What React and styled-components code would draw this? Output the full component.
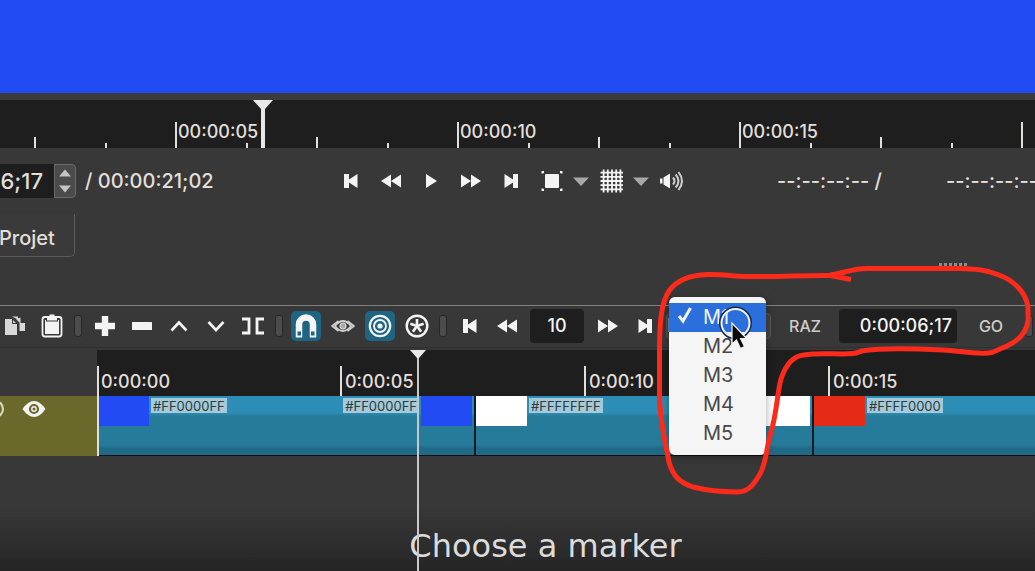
import React from 'react';
import styled, { createGlobalStyle } from 'styled-components';

const Colors = {
  panel: '#383838',
  dark: '#1e1e1e',
  text: '#e2dfda',
  white: '#f4f4f4',
  muted: '#a8a8a8',
  blue: '#234bf4',
  red: '#e52a18',
  teal: '#267b9a',
  tealLight: '#2c8eb6',
  tealDark: '#206a87',
  active: '#1d6582',
  olive: '#6b682b',
  select: '#2a6fdb',
  pen: '#fb2a1b',
};

const GlobalStyle = createGlobalStyle`
  * { box-sizing: border-box; }

  body {
    margin: 0;
    background: ${Colors.panel};
    color: ${Colors.text};
    font-family: Inter, "Liberation Sans", sans-serif;
    font-size: 18px;
  }

  button, input, select { font: inherit; color: inherit; }
`

const Page = styled.div`
  position: relative;
  display: flex;
  flex-direction: column;
  min-height: 100vh;
  overflow: hidden;
`

const Preview = styled.div`
  height: 93px;
  background: ${Colors.blue};
`

const Player = styled.section`
  border-top: 7px solid #3c3c3c;
`

/* rulers */

const Ruler = styled.div`
  position: relative;
  display: flex;
  height: ${(props) => props.$height}px;
  background: ${Colors.dark};
  overflow: hidden;
`

const RulerTrack = styled.div`
  display: flex;
  flex: none;
  margin-left: ${(props) => props.$offset}px;
`

const Segment = styled.div`
  display: flex;
  flex: none;
  width: ${(props) => props.$width}px;
`

const Tick = styled.div`
  display: flex;
  flex: 1;
  align-items: flex-end;

  &::before {
    content: '';
    flex: none;
    width: 2px;
    height: ${(props) => props.$height}px;
    background: ${Colors.text};
  }
`

const TickLabel = styled.span`
  flex: none;
  width: 0;
  padding-left: ${(props) => props.$gap}px;
  padding-bottom: ${(props) => props.$bottom}px;
  line-height: 24px;
  font-weight: 500;
  white-space: nowrap;
`

const PlayerHead = styled.svg`
  position: absolute;
  top: 0;
  left: 253px;
`

/* transport bar */

const Transport = styled.div`
  display: grid;
  grid-template-columns: 331px 360px auto;
  align-items: center;
  height: 66px;
  overflow: hidden;
  font-size: 20px;
  font-weight: 500;
`

const Position = styled.div`
  display: flex;
  align-items: center;
  gap: 9px;
  white-space: nowrap;
`

const SpinBox = styled.div`
  display: flex;
  height: 34px;
  margin-left: -86px;
  border-radius: 4px;
  overflow: hidden;
`

const SpinInput = styled.input`
  width: 140px;
  padding: 0 11px 0 0;
  border: 0;
  background: ${Colors.dark};
  text-align: right;
  font-size: 22px;
`

const SpinButtons = styled.div`
  display: flex;
  flex-direction: column;
  width: 22px;
  border: 1px solid #6a6a6a;
  border-radius: 0 4px 4px 0;
  background: #4b4b4b;
`

const SpinButton = styled.button`
  display: flex;
  flex: 1;
  align-items: center;
  justify-content: center;
  padding: 0;
  border: 0;
  background: none;
`

const Controls = styled.div`
  display: flex;
  align-items: center;
`

const Selection = styled.div`
  display: flex;
  gap: 64px;
  padding-left: 86px;
  white-space: nowrap;
`

const IconButton = styled.button`
  display: flex;
  flex: none;
  align-items: center;
  justify-content: center;
  width: ${(props) => props.$width || 40}px;
  height: 30px;
  padding: 0;
  border: 0;
  background: none;
  color: ${Colors.white};
`

const TabRow = styled.div`
  display: flex;
  height: 43px;
`

const Tab = styled.button`
  width: 77px;
  margin-left: -2px;
  padding: 6px 0 0;
  border: 1px solid #5a5a5a;
  border-top: 0;
  border-radius: 0 0 5px 0;
  background: #3a3a3a;
  text-align: left;
  font-size: 20px;
  font-weight: 500;
`

const GripRow = styled.div`
  display: flex;
  justify-content: flex-end;
  height: 48px;
  padding: 6px 67px 0 0;
`

const Grip = styled.div`
  width: 29px;
  height: 3px;
  background: repeating-linear-gradient(90deg, #8c8c8c 0 3px, transparent 3px 5px);
`

/* timeline toolbar */

const Toolbar = styled.div`
  display: flex;
  align-items: center;
  height: 43px;
  padding-bottom: 2px;
  border-top: 1px solid #808080;
  border-bottom: 1px solid #2f2f2f;
`

const ToolButton = styled(IconButton)`
  width: 37px;

  &:first-child {
    width: 33px;
    padding-right: 4px;
  }

  svg {
    box-sizing: content-box;
    padding: 2px;
    border-radius: 5px;
    background: ${(props) => (props.$active ? Colors.active : 'none')};
  }
`

const Separator = styled.div`
  display: flex;
  flex: none;
  justify-content: center;
  width: 16px;

  &::before {
    content: '';
    width: 6px;
    height: 20px;
    border: 1px solid #272727;
    border-radius: 3px;
    background: #4c4c4c;
  }
`

const ToolInput = styled.input`
  flex: none;
  width: ${(props) => props.$width}px;
  height: 34px;
  margin: 0 ${(props) => props.$margin}px;
  padding: 0 ${(props) => (props.$align === 'right' ? 5 : 0)}px;
  border: 0;
  border-radius: 4px;
  background: ${Colors.dark};
  color: ${Colors.white};
  text-align: ${(props) => props.$align};
  font-weight: 500;
`

const TextButton = styled.button`
  flex: none;
  width: 60px;
  height: 30px;
  padding: 0;
  border: 0;
  background: none;
  color: #cfcdc9;
  font-size: 16px;
  font-weight: 500;
`

const MarkerPicker = styled.div`
  position: relative;
  flex: none;
  margin-right: 4px;
  padding-left: 3px;
`

const MarkerSelect = styled.select`
  width: 105px;
  height: 26px;
  border: 1px solid #585858;
  border-radius: 4px;
  background: #444;
  appearance: none;
`

const Menu = styled.ul`
  position: absolute;
  z-index: 2;
  top: -16px;
  left: 6px;
  width: 97px;
  margin: 0;
  padding: 6px 0 7px;
  border-radius: 6px;
  background: #f5f5f5;
  box-shadow: 0 2px 8px rgba(0, 0, 0, 0.35);
  list-style: none;
`

const MenuItem = styled.button`
  display: grid;
  grid-template-columns: 24px auto;
  gap: 4px;
  align-items: center;
  width: 100%;
  height: 29px;
  padding: 0 6px;
  border: 0;
  background: ${(props) => (props.$selected ? Colors.select : 'none')};
  color: ${(props) => (props.$selected ? Colors.white : '#484848')};
  font-size: 20px;
  text-align: left;
`

/* timeline */

const Timeline = styled.section`
  position: relative;
  display: grid;
  grid-template-columns: 97px 1fr;
  grid-template-rows: 46px 60px 1fr;
  flex: 1;
  padding-top: 2px;
`

const TrackHeader = styled.div`
  display: flex;
  gap: 5px;
  padding-top: 2px;
  background: ${Colors.olive};
  overflow: hidden;
`

const HeaderButton = styled(IconButton)`
  width: 34px;
  height: 22px;

  &:first-child {
    margin-left: -22px;
  }
`

const Track = styled.div`
  display: flex;
  gap: 2px;
  padding-left: 1px;
  border-bottom: 1px solid #101010;
  background: #0b1a20;
  overflow: hidden;
`

const Clip = styled.div`
  display: flex;
  flex: ${(props) => (props.$width ? `0 0 ${props.$width}px` : 1)};
  justify-content: space-between;
  align-items: flex-start;
  padding-right: 2px;
  background: linear-gradient(
    ${Colors.tealLight} 17px,
    ${Colors.teal} 20px 49px,
    ${Colors.tealDark} 52px
  );
`

const ClipEnd = styled.div`
  display: flex;
  gap: 2px;
`

const Thumb = styled.div`
  width: 51px;
  height: 30px;
  background: ${(props) => props.$color};
`

const ClipLabel = styled.span`
  height: 15px;
  margin-top: 2px;
  padding: 0 2px;
  background: #a5c9d6;
  color: #2a3b44;
  font-size: 13px;
  line-height: 17px;
`

const OriginLine = styled.div`
  position: absolute;
  top: 18px;
  left: 97px;
  width: 2px;
  height: 90px;
  background: ${Colors.text};
`

const TimelineHead = styled.div`
  position: absolute;
  top: 2px;
  bottom: 0;
  left: 417px;
  width: 2px;
  background: #c8c8c8;

  svg {
    position: absolute;
    top: 0;
    left: -7px;
  }
`

const Caption = styled.div`
  display: flex;
  grid-column: 1 / -1;
  align-items: flex-end;
  justify-content: center;
  padding: 0 0 6px 56px;
  background: linear-gradient(${Colors.panel} 45%, #252525);
  color: #dcdcdc;
  font-family: "DejaVu Sans", sans-serif;
  font-size: 32px;
  line-height: 38px;
`

const PenMark = styled.svg`
  position: absolute;
  z-index: 3;
  top: 260px;
  left: 650px;
  pointer-events: none;
`

/* icons, drawn around their own centre */

const Icon = ({ size = 24, children }) => (
  <svg
    width={size}
    height={size}
    viewBox={`${-size / 2} ${-size / 2} ${size} ${size}`}
    fill="currentColor"
    aria-hidden="true"
  >
    {children}
  </svg>
)

const SkipBack = () => <Icon><path d="M-7-7h5v5.500L6.500-7V7L-2 1.500V7h-5z" /></Icon>
const SkipForward = () => <Icon><path d="M7-7H2v5.500L-6.500-7V7L2 1.500V7h5z" /></Icon>
const Rewind = () => <Icon><path d="M0-6.500V6.500L-10 0zM10-6.500V6.500L0 0z" /></Icon>
const Forward = () => <Icon><path d="M0-6.500V6.500L10 0zM-10-6.500V6.500L0 0z" /></Icon>
const Play = () => <Icon><path d="M-5-7L6 0-5 7z" /></Icon>

const Zoom = () => (
  <Icon>
    <rect x="-6" y="-7" width="14" height="14" rx="1" />
    <path d="M-8.500-7.500v-1.500h1.500M9-9h1.500v1.500M10.500 7.500V9H9M-7 9h-1.500V7.500" fill="none" stroke="currentColor" strokeWidth="2" />
  </Icon>
)

const Grid = () => (
  <Icon>
    <path
      d="M-7.400-11.500v23M-3.200-11.500v23M1-11.500v23M5.200-11.500v23M9.400-11.500v23M-10.500-8.400h23M-10.500-4.200h23M-10.500 0h23M-10.500 4.200h23M-10.500 8.400h23"
      stroke="currentColor"
      strokeWidth="1.800"
    />
  </Icon>
)

const Arrow = ({ up, small }) => (
  <Icon size={small ? 12 : 16}>
    <path
      d={small ? 'M-6-3.500H6L0 3.500z' : 'M-8-3.500H8L0 5z'}
      fill={small ? '#c4c4c4' : Colors.muted}
      transform={up ? 'scale(1 -1)' : undefined}
    />
  </Icon>
)

const Speaker = () => (
  <Icon size={26}>
    <path d="M-11-2.500h2.500v5H-11zM-7.500-3.500L-1-7.500v15l-6.500-4z" />
    <path
      d="M2-3.500q3 3.500 0 7M4.700-6.500q5.600 6.500 0 13M7.500-9q7 9 0 18"
      fill="none"
      stroke="#cfcfcf"
      strokeWidth="2"
    />
  </Icon>
)

const Copy = () => (
  <Icon>
    <path d="M-10-7h7v5h5v11h-12z" fill="#d8d8d8" />
    <path d="M-2-7.500L2.500-3H-2z" fill="#d8d8d8" />
    <path d="M-3-9.500h6v3M5.500-8.500V-3H10V5H4.500V-3.500L1-7" fill="#d8d8d8" />
    <path d="M-2.500-7.500L3-2" stroke={Colors.panel} strokeWidth="1.500" />
  </Icon>
)

const Paste = () => (
  <Icon>
    <rect x="-9.500" y="-9" width="19" height="19.500" rx="2.500" fill="none" stroke="currentColor" strokeWidth="1.800" />
    <path d="M-7-6H7V8H-7z" />
    <path d="M-6-7.500h12v3H-6z" fill={Colors.panel} />
    <path d="M-5-9.500h2.500v-2h5v2H5v4H-5z" />
  </Icon>
)

const Plus = () => <Icon><path d="M-3.200-10h6.400v6.800H10v6.400H3.200V10h-6.400V3.200H-10v-6.400h6.800z" /></Icon>
const Minus = () => <Icon><rect x="-10" y="-4" width="20" height="8" rx="0.500" /></Icon>
const Chevron = ({ up }) => (
  <Icon>
    <path
      d={up ? 'M-7.500 4.500L0-3.500 7.500 4.500' : 'M-7.500-4L0 4 7.500-4'}
      fill="none"
      stroke="currentColor"
      strokeWidth="2.600"
    />
  </Icon>
)

const Split = () => (
  <Icon>
    <path d="M-11-7h7V7h-7M11-7H4V7h7" fill="none" stroke="currentColor" strokeWidth="2.800" />
  </Icon>
)

const Magnet = () => (
  <Icon size={26}>
    <path d="M-7 11.500V-1.500a7 7 0 0 1 14 0v13" fill="none" stroke="currentColor" strokeWidth="6.500" />
    <path d="M-8.500 5.500H-5v4h-3.500zM5 5.500h3.500v4H5z" fill={Colors.active} />
  </Icon>
)

const Scrub = () => (
  <Icon>
    <path d="M-4.500-5L-11 0-4.500 5M4.500-5L11 0 4.500 5" fill="none" stroke="#d0d0d0" strokeWidth="1.800" />
    <path d="M-8 0Q0-10 8 0 0 10-8 0z" fill="none" stroke="#d0d0d0" strokeWidth="1.800" />
    <circle r="3" fill="#a8a8a8" stroke="#e0e0e0" strokeWidth="1.200" />
  </Icon>
)

const Ripple = () => (
  <Icon size={26}>
    <g fill="none" stroke="currentColor">
      <circle r="10.200" strokeWidth="2.200" />
      <circle r="6" strokeWidth="1.900" />
    </g>
    <circle r="2.600" />
  </Icon>
)

const RippleAll = () => (
  <Icon>
    <circle r="10.300" fill="none" stroke="currentColor" strokeWidth="2.400" />
    {[0, 72, 144, 216, 288].map((angle) => (
      <path key={angle} d="M0 0V-7" transform={`rotate(${angle})`} stroke="currentColor" strokeWidth="2.600" />
    ))}
  </Icon>
)

const Eye = () => (
  <Icon>
    <path d="M-11.500 0Q-6-8 0-8T11.500 0Q6 8 0 8T-11.500 0z" />
    <circle r="4" fill="none" stroke={Colors.olive} strokeWidth="2.200" />
    <circle r="1.500" fill={Colors.olive} />
  </Icon>
)

const Mute = () => (
  <Icon>
    <circle r="8" fill="none" stroke="#d8d6c0" strokeWidth="2.200" />
  </Icon>
)

const Check = () => (
  <Icon size={20}>
    <path d="M-6 1L-2 6 5.500-7" fill="none" stroke="currentColor" strokeWidth="3" />
  </Icon>
)

const playerTimes = ['', '00:00:05', '00:00:10', '00:00:15', '']
const timelineTimes = ['0:00:00', '0:00:05', '0:00:10', '0:00:15']
const markers = ['M1', 'M2', 'M3', 'M4', 'M5']

const PlayerRuler = () => (
  <Ruler $height={48}>
    <RulerTrack $offset={-107}>
      {playerTimes.map((time, index) => (
        <Segment key={index} $width={282}>
          <Tick $height={26}>{time && <TickLabel $gap={1} $bottom={4}>{time}</TickLabel>}</Tick>
          <Tick $height={5} />
          <Tick $height={11} />
          <Tick $height={5} />
        </Segment>
      ))}
    </RulerTrack>
    <PlayerHead width="20" height="48" aria-hidden="true">
      <path d="M0 0h20l-8 9v39H8V9z" fill="#e8e8e8" />
    </PlayerHead>
  </Ruler>
)

const MarkerMenu = () => (
  <MarkerPicker>
    <MarkerSelect aria-label="Marker" defaultValue="M1">
      {markers.map((marker) => <option key={marker}>{marker}</option>)}
    </MarkerSelect>
    <Menu role="listbox" aria-label="Markers">
      {markers.map((marker, index) => (
        <li key={marker} role="presentation">
          <MenuItem role="option" aria-selected={index === 0} $selected={index === 0}>
            <span>{index === 0 && <Check />}</span>
            {marker}
          </MenuItem>
        </li>
      ))}
    </Menu>
  </MarkerPicker>
)

const Annotation = () => (
  <PenMark width="385" height="240" aria-hidden="true">
    <path
      d="M201 19.500L180 15.500C155 15 130 17 97 16.500C82 16 70 14 58 14.500C40 15 26 21 19 31C11 43 10 62 9.500 85V135C9.500 160 16 185 19 202C23 217 31 223 43 227C55 230 72 232 87 232C99 232 104 224 110 214C117 201 116 188 121 172C127 152 127 134 131 119C136 104 143 96 154 95C170 92 190 95 203 93.500C210 93 208 91 215 90.500C235 87.500 262 88.500 293 90C310 91 330 95 342 92.500L357 86C370 80 377 72 378 60V47C376 33 365 21 349 15C335 9 322 9 306 8.500H217C202 8.500 195 13 180 15"
      fill="none"
      stroke={Colors.pen}
      strokeWidth="5"
      strokeLinejoin="round"
    />
    <circle cx="85.500" cy="63" r="15" fill="none" stroke="#16294f" strokeWidth="3" />
    <circle cx="85.500" cy="63" r="14" fill="none" stroke="#f0f4ff" strokeWidth="2" />
    <path
      d="M82 63V84l4.500-4 4 8.500 4-2-4-8h6z"
      fill="#0a0a0a"
      stroke="#f2f2f2"
      strokeWidth="1.200"
    />
  </PenMark>
)

export default function App() {
  return (
    <Page>
      <GlobalStyle />
      <Preview />
      <Player>
        <PlayerRuler />
        <Transport>
          <Position>
            <SpinBox>
              <SpinInput aria-label="Position" defaultValue="00:00:06;17" />
              <SpinButtons>
                <SpinButton aria-label="Next frame"><Arrow up small /></SpinButton>
                <SpinButton aria-label="Previous frame"><Arrow small /></SpinButton>
              </SpinButtons>
            </SpinBox>
            <span>/ 00:00:21;02</span>
          </Position>
          <Controls>
            <IconButton aria-label="Skip previous"><SkipBack /></IconButton>
            <IconButton aria-label="Rewind"><Rewind /></IconButton>
            <IconButton aria-label="Play"><Play /></IconButton>
            <IconButton aria-label="Fast forward"><Forward /></IconButton>
            <IconButton aria-label="Skip next"><SkipForward /></IconButton>
            <IconButton aria-label="Zoom"><Zoom /></IconButton>
            <IconButton aria-label="Zoom options" $width={20}><Arrow /></IconButton>
            <IconButton aria-label="Grid"><Grid /></IconButton>
            <IconButton aria-label="Grid options" $width={20}><Arrow /></IconButton>
            <IconButton aria-label="Volume"><Speaker /></IconButton>
          </Controls>
          <Selection>
            <span>--:--:--:-- /</span>
            <span>--:--:--:--</span>
          </Selection>
        </Transport>
        <TabRow>
          <Tab>Projet</Tab>
        </TabRow>
        <GripRow><Grip /></GripRow>
      </Player>
      <Toolbar>
        <ToolButton aria-label="Copy"><Copy /></ToolButton>
        <ToolButton aria-label="Paste"><Paste /></ToolButton>
        <Separator />
        <ToolButton aria-label="Append"><Plus /></ToolButton>
        <ToolButton aria-label="Remove"><Minus /></ToolButton>
        <ToolButton aria-label="Lift"><Chevron up /></ToolButton>
        <ToolButton aria-label="Overwrite"><Chevron /></ToolButton>
        <ToolButton aria-label="Split"><Split /></ToolButton>
        <Separator />
        <ToolButton aria-label="Snap" $active><Magnet /></ToolButton>
        <ToolButton aria-label="Scrub"><Scrub /></ToolButton>
        <ToolButton aria-label="Ripple" $active><Ripple /></ToolButton>
        <ToolButton aria-label="Ripple all tracks"><RippleAll /></ToolButton>
        <Separator />
        <ToolButton aria-label="Go to start"><SkipBack /></ToolButton>
        <ToolButton aria-label="Step back"><Rewind /></ToolButton>
        <ToolInput aria-label="Step" defaultValue="10" $width={54} $margin={5} $align="center" />
        <ToolButton aria-label="Step forward"><Forward /></ToolButton>
        <ToolButton aria-label="Go to end"><SkipForward /></ToolButton>
        <MarkerMenu />
        <TextButton>RAZ</TextButton>
        <ToolInput aria-label="Marker time" defaultValue="0:00:06;17" $width={118} $margin={4} $align="right" />
        <TextButton>GO</TextButton>
        <Separator />
      </Toolbar>
      <Timeline>
        <div />
        <Ruler $height={46}>
          <RulerTrack $offset={-1}>
            {timelineTimes.map((time) => (
              <Segment key={time} $width={244}>
                <Tick $height={30}><TickLabel $gap={3} $bottom={2}>{time}</TickLabel></Tick>
              </Segment>
            ))}
          </RulerTrack>
        </Ruler>
        <TrackHeader>
          <HeaderButton aria-label="Mute"><Mute /></HeaderButton>
          <HeaderButton aria-label="Hide"><Eye /></HeaderButton>
        </TrackHeader>
        <Track>
          <Clip $width={376}>
            <ClipEnd><Thumb $color={Colors.blue} /><ClipLabel>#FF0000FF</ClipLabel></ClipEnd>
            <ClipEnd><ClipLabel>#FF0000FF</ClipLabel><Thumb $color={Colors.blue} /></ClipEnd>
          </Clip>
          <Clip $width={336}>
            <ClipEnd><Thumb $color="#fff" /><ClipLabel>#FFFFFFFF</ClipLabel></ClipEnd>
            <ClipEnd><Thumb $color="#fff" /></ClipEnd>
          </Clip>
          <Clip>
            <ClipEnd><Thumb $color={Colors.red} /><ClipLabel>#FFFF0000</ClipLabel></ClipEnd>
          </Clip>
        </Track>
        <Caption>Choose a marker</Caption>
        <OriginLine />
        <TimelineHead>
          <svg width="16" height="9" aria-hidden="true">
            <path d="M0 0h16L9 8H7z" fill="#e8e8e8" />
          </svg>
        </TimelineHead>
      </Timeline>
      <Annotation />
    </Page>
  )
}
